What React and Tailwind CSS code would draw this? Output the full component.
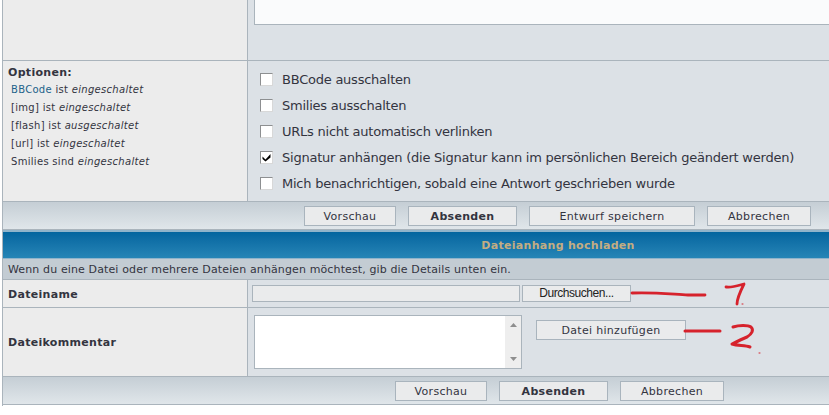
const Btn = ({ w, bold, children }) => (
  <button className={`${w} h-[20px] bg-[#eaebec] border border-[#a9b4bd] text-[11px] leading-[19px] tracking-[0.3px] text-[#33343f] ${bold ? 'font-bold' : ''}`}>
    {children}
  </button>
);

const Check = ({ checked, children }) => (
  <label className="flex items-center h-[26px]">
    <span className="w-[13px] h-[13px] mr-[9px] bg-white border border-[#8d8f91] border-r-[#d8d8d8] border-b-[#d8d8d8] flex items-center justify-center">
      {checked && (
        <svg width="9" height="9" viewBox="0 0 9 9">
          <path d="M0.5 3.5l3 3L8.5 1v3.5L3.5 8.5 0.5 6z" fill="#000" />
        </svg>
      )}
    </span>
    <span className="pt-px">{children}</span>
  </label>
);

const Status = ({ children, state }) => (
  <div className="h-[18px] leading-[18px] text-[10px] tracking-[0.3px] text-[#33343f] whitespace-nowrap">
    {children} <em>{state}</em>
  </div>
);

const BtnBar = ({ pad, children }) => (
  <div className={`h-[28px] flex items-center ${pad} gap-[12px] bg-gradient-to-b from-[#c5ced5] to-[#e0e6ea] border-b border-[#aab4bc]`}>
    {children}
  </div>
);

export default function App() {
  return (
    <div className="relative w-[829px] h-[415px] overflow-hidden bg-white text-[#33343f]" style={{ fontFamily: '"DejaVu Sans", sans-serif' }}>
      <div className="ml-[2px] border-l border-[#aab4bc] h-[406px] flex flex-col">
        <div className="flex h-[61px] shrink-0 border-b border-[#aab4bc]">
          <div className="w-[245px] shrink-0 bg-[#ececec] border-r border-[#aab4bc]" />
          <div className="flex-1 bg-[#dce1e6] pl-[6px]">
            <div className="h-[25px] bg-[#fafbfc] border-l border-b border-[#aab4bc]" />
          </div>
        </div>

        <div className="flex h-[141px] shrink-0 border-b border-[#aab4bc]">
          <div className="w-[245px] shrink-0 bg-[#ececec] border-r border-[#aab4bc] pl-[5px] pt-[5px]">
            <div className="text-[11px] leading-[14px] font-bold tracking-[0.3px]">Optionen:</div>
            <div className="pl-[3px] pt-[1px]">
              <Status state="eingeschaltet"><span className="text-[#22628a]">BBCode</span> ist</Status>
              <Status state="eingeschaltet">[img] ist</Status>
              <Status state="ausgeschaltet">[flash] ist</Status>
              <Status state="eingeschaltet">[url] ist</Status>
              <Status state="eingeschaltet">Smilies sind</Status>
            </div>
          </div>
          <div className="flex-1 bg-[#dce1e6] pl-[12px] pt-[5px] text-[13px] tracking-[-0.235px] whitespace-nowrap">
            <Check>BBCode ausschalten</Check>
            <Check>Smilies ausschalten</Check>
            <Check>URLs nicht automatisch verlinken</Check>
            <Check checked>Signatur anhängen (die Signatur kann im persönlichen Bereich geändert werden)</Check>
            <Check>Mich benachrichtigen, sobald eine Antwort geschrieben wurde</Check>
          </div>
        </div>

        <BtnBar pad="pl-[301px]">
          <Btn w="w-[92px]">Vorschau</Btn>
          <Btn w="w-[109px]" bold>Absenden</Btn>
          <Btn w="w-[166px]">Entwurf speichern</Btn>
          <Btn w="w-[104px]">Abbrechen</Btn>
        </BtnBar>

        <div className="h-[29px] shrink-0 pt-[2px] bg-[#8fb4cb]">
          <div className="h-[26px] bg-gradient-to-b from-[#03659f] to-[#2585b6] text-center text-[11px] leading-[28px] font-bold text-[#c4ad82] pl-[284px] tracking-[0.3px]">
            Dateianhang hochladen
          </div>
        </div>

        <div className="h-[21px] shrink-0 bg-[#c3ccd3] border-b border-[#aab4bc] pl-[5px] text-[11px] leading-[22px] tracking-[0.125px] whitespace-nowrap">
          Wenn du eine Datei oder mehrere Dateien anhängen möchtest, gib die Details unten ein.
        </div>

        <div className="flex h-[28px] shrink-0 border-b border-[#aab4bc]">
          <div className="w-[245px] shrink-0 bg-[#ececec] border-r border-[#aab4bc] pl-[5px] text-[11px] leading-[29px] font-bold tracking-[0.3px]">Dateiname</div>
          <div className="flex-1 bg-[#dce1e6] flex items-center pl-[4px] gap-[2px]">
            <div className="w-[268px] h-[17px] bg-[#eaebec] border border-[#aab4bc]" />
            <button className="w-[109px] h-[17px] bg-[#eaebec] border border-[#aab4bc] text-[12px] leading-[15px] tracking-[-0.45px] text-[#222]" style={{ fontFamily: '"Liberation Sans", sans-serif' }}>
              Durchsuchen...
            </button>
          </div>
        </div>

        <div className="flex h-[69px] shrink-0 border-b border-[#aab4bc]">
          <div className="w-[245px] shrink-0 bg-[#ececec] border-r border-[#aab4bc] pl-[5px] text-[11px] leading-[70px] font-bold tracking-[0.3px]">Dateikommentar</div>
          <div className="flex-1 bg-[#dce1e6] flex items-start pl-[6px] pt-[7px]">
            <div className="w-[268px] h-[54px] bg-white border border-[#aab4bc] flex justify-end">
              <div className="w-[16px] bg-[#eeeeee] flex flex-col justify-between items-center py-[7px]">
                <svg width="7" height="4" viewBox="0 0 7 4"><path d="M3.5 0L7 4H0z" fill="#8e8e8e" /></svg>
                <svg width="7" height="4" viewBox="0 0 7 4"><path d="M0 0h7L3.5 4z" fill="#8e8e8e" /></svg>
              </div>
            </div>
            <Btn w="w-[150px] ml-[14px] mt-[5px]">Datei hinzufügen</Btn>
          </div>
        </div>

        <BtnBar pad="pl-[392px]">
          <Btn w="w-[92px]">Vorschau</Btn>
          <Btn w="w-[109px]" bold>Absenden</Btn>
          <Btn w="w-[104px]">Abbrechen</Btn>
        </BtnBar>
      </div>

      <svg className="absolute left-0 top-0 pointer-events-none" width="829" height="415" fill="none" stroke="#d6222c" strokeLinecap="round" strokeLinejoin="round">
        <path d="M632 293c20-1 38 1 56 2h17" strokeWidth="2.8" />
        <path d="M726 287c6 1 14-2 18-3-3 6-7 14-7 20" strokeWidth="2.8" />
        <path d="M685 331h35" strokeWidth="3" />
        <path d="M733 327c6-2 15-2 18 0 3 3 1 7-4 10-5 2-11 5-15 7 6 2 13 1 18 3" strokeWidth="3" />
        <path d="M742 304h1M759 353h1" strokeWidth="1" />
      </svg>
    </div>
  );
}
